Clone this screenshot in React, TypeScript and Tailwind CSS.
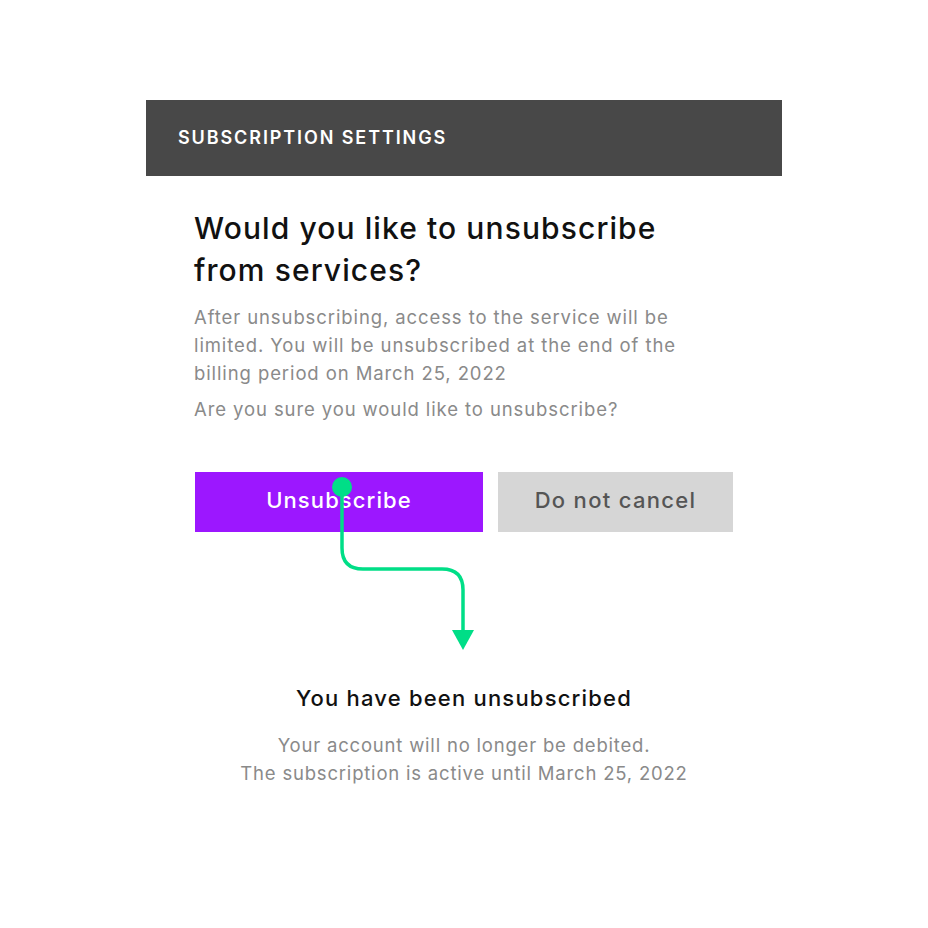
import React from "react";

export default function App() {
  return (
    <div
      className="w-[928px] h-[928px] bg-white"
      style={{ fontFamily: "Inter, 'Liberation Sans', sans-serif" }}
    >
      <div className="pt-[100px] w-[636px] ml-[146px]">
        <div className="h-[76px] bg-[#484848] flex items-center pl-[32px]">
          <span className="text-white text-[18px] font-semibold tracking-[1.9px] leading-none">
            SUBSCRIPTION SETTINGS
          </span>
        </div>
        <div className="pl-[48px] pr-[20px]">
          <h1 className="mt-[31px] text-[30px] leading-[42px] font-medium text-[#111] tracking-[1.1px]">
            Would you like to unsubscribe
            <br />
            from services?
          </h1>
          <p className="mt-[12px] text-[18.5px] leading-[28px] text-[#8a8a8a] tracking-[0.9px] whitespace-nowrap">
            After unsubscribing, access to the service will be
            <br />
            limited. You will be unsubscribed at the end of the
            <br />
            billing period on March 25, 2022
          </p>
          <p className="mt-[8px] text-[18.5px] leading-[28px] text-[#8a8a8a] tracking-[0.9px]">
            Are you sure you would like to unsubscribe?
          </p>
          <div className="relative mt-[49px] pl-[1px]">
            <div className="flex gap-[15px]">
              <button className="w-[288px] h-[60px] pb-[3px] bg-[#9c17ff] text-white text-[22px] font-medium tracking-[1.1px]">
                Unsubscribe
              </button>
              <button className="w-[235px] h-[60px] pb-[3px] bg-[#d6d6d6] text-[#555] text-[22px] font-medium tracking-[1.3px]">
                Do not cancel
              </button>
            </div>
            <div className="h-[118px]" />
            <svg
              className="absolute left-0 top-0"
              width="300"
              height="190"
              viewBox="0 0 300 190"
            >
              <path
                d="M148 15 V76 Q148 97 169 97 H248 Q269 97 269 118 V160"
                fill="none"
                stroke="#00de87"
                strokeWidth="3.5"
              />
              <circle cx="148" cy="15" r="10" fill="#00de87" />
              <polygon points="258,158 280,158 269,178" fill="#00de87" />
            </svg>
          </div>
        </div>
        <div className="text-center mt-[32px]">
          <div className="text-[22px] font-medium text-[#111] leading-[32px] tracking-[1.2px]">
            You have been unsubscribed
          </div>
          <div className="mt-[17px] text-[18.5px] leading-[28px] text-[#8a8a8a] tracking-[0.8px]">
            Your account will no longer be debited.
            <br />
            The subscription is active until March 25, 2022
          </div>
        </div>
      </div>
    </div>
  );
}
